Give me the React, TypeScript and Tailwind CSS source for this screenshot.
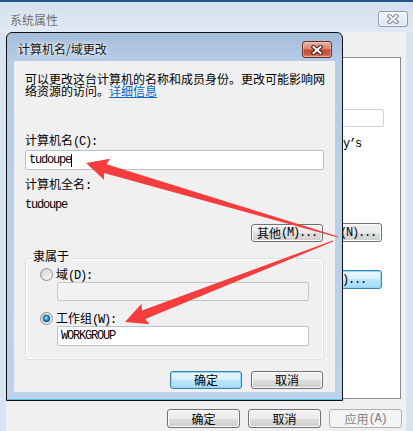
import React from "react";

const cjk = "font-['Noto_Sans_CJK_SC',sans-serif]";

function A({ children }: { children: React.ReactNode }) {
  return (
    <span className="font-['Liberation_Mono','Noto_Sans_CJK_SC',monospace] text-[12px] tracking-[-1.2px]">
      {children}
    </span>
  );
}

type BtnProps = {
  children: React.ReactNode;
  kind?: "normal" | "default" | "disabled";
  end?: boolean;
  className?: string;
};

function Btn({ children, kind = "normal", end = false, className = "" }: BtnProps) {
  const base =
    "flex items-center rounded-[3px] border text-[12px] leading-none whitespace-nowrap shrink-0";
  const j = end ? "justify-end" : "justify-center";
  const k =
    kind === "default"
      ? "border-[#3c7fb1] bg-[linear-gradient(to_bottom,#eaf6fd_0%,#d9f0fc_50%,#bee6fd_50%,#a7d9f5_100%)] shadow-[inset_0_0_0_1px_#8fd6f7] text-black"
      : kind === "disabled"
      ? "border-[#adb2b5] bg-[#f4f4f4] text-[#838383]"
      : "border-[#707070] bg-[linear-gradient(to_bottom,#f2f2f2_0%,#ebebeb_50%,#dddddd_50%,#cfcfcf_100%)] shadow-[inset_0_0_0_1px_#fcfcfc] text-black";
  return <div className={`${base} ${j} ${k} ${className}`}>{children}</div>;
}

function Radio({ checked = false }: { checked?: boolean }) {
  return (
    <svg width="13" height="13" viewBox="0 0 13 13" className="shrink-0">
      <defs>
        <linearGradient id="rgOuter" x1="0" y1="0" x2="1" y2="1">
          <stop offset="0" stopColor="#c9c9c9" />
          <stop offset="1" stopColor="#fbfbfb" />
        </linearGradient>
        <linearGradient id="rgInner" x1="0" y1="0" x2="1" y2="1">
          <stop offset="0" stopColor="#d6d6d6" />
          <stop offset="1" stopColor="#f7f7f7" />
        </linearGradient>
        <radialGradient id="rgDot" cx="0.45" cy="0.4" r="0.65">
          <stop offset="0" stopColor="#a8e8ff" />
          <stop offset="0.45" stopColor="#2f9ad9" />
          <stop offset="1" stopColor="#0b3f70" />
        </radialGradient>
      </defs>
      <circle cx="6.5" cy="6.5" r="6" fill="url(#rgOuter)" stroke="#8e8f8f" />
      <circle cx="6.5" cy="6.5" r="4.3" fill="url(#rgInner)" />
      {checked && (
        <circle cx="6.5" cy="6.5" r="3.4" fill="url(#rgDot)" stroke="#1a4a78" strokeWidth="0.7" />
      )}
    </svg>
  );
}

function XGlyph({ outline, fill }: { outline: string; fill: string }) {
  return (
    <svg width="12" height="10" viewBox="0 0 12 10">
      <path d="M2.5 2 L9.5 8 M9.5 2 L2.5 8" stroke={outline} strokeWidth="4.2" strokeLinecap="square" fill="none" />
      <path d="M2.5 2 L9.5 8 M9.5 2 L2.5 8" stroke={fill} strokeWidth="2" strokeLinecap="square" fill="none" />
    </svg>
  );
}

export default function App() {
  return (
    <div className={`relative w-[413px] h-[431px] overflow-hidden bg-[#d8e4f2] ${cjk}`}>
      {/* Background window: 系统属性 */}
      <div className="flex flex-col h-full">
        <div className="h-[2px] shrink-0 bg-[#25548c]" />
        <div className="h-[30px] shrink-0 flex items-start justify-between pl-[10px] pr-[5px] bg-[linear-gradient(to_bottom,#d3e0ef,#e0e9f4)]">
          <span className="mt-[12px] text-[12px] leading-[12px] text-[#6d6d6d] [text-shadow:0_0_6px_#fff]">
            系统属性
          </span>
          <div className="mt-[9px] w-[30px] h-[16px] rounded-[3px] border border-[#8c98a8] bg-[linear-gradient(to_bottom,#f4f7fb,#dbe3ee)] shadow-[inset_0_0_0_1px_rgba(255,255,255,0.7)] flex items-center justify-center">
            <XGlyph outline="#7d8898" fill="#ffffff" />
          </div>
        </div>
        <div className="flex-1 flex pl-[6px] pr-[7px] min-h-0">
          <div className="flex-1 bg-[#f0f0f0] flex flex-col">
            <div className="h-[25px] shrink-0" />
            <div className="h-[342px] shrink-0 ml-[7px] mr-[5px] bg-white border border-[#898c95] flex flex-col">
              <div className="mt-[51px] self-end mr-[16px] w-[300px] h-[18px] rounded-[2px] border border-[#cfd4da] bg-white" />
              <div className="mt-[7px] pl-[329px] leading-[12px] text-black">
                <A>y’s</A>
              </div>
              <Btn end className="mt-[73px] self-end mr-[18px] w-[110px] h-[19px] pr-[5px]">
                <A>ID(N)...</A>
              </Btn>
              <Btn kind="default" end className="mt-[28px] self-end mr-[18px] w-[110px] h-[19px] pr-[15px]">
                <A>(C)...</A>
              </Btn>
            </div>
            <div className="mt-[10px] flex justify-end gap-[8px] pr-[4px]">
              <Btn className="w-[73px] h-[19px]">确定</Btn>
              <Btn className="w-[73px] h-[19px]">取消</Btn>
              <Btn kind="disabled" className="w-[73px] h-[19px]">
                应用<A>(A)</A>
              </Btn>
            </div>
          </div>
        </div>
      </div>

      {/* Dialog window: 计算机名/域更改 */}
      <div className="absolute left-[6px] top-[32px] w-[337px] h-[369px] rounded-t-[6px] border border-[#111111] bg-[linear-gradient(to_bottom,#a3bcdb_0px,#b6cde8_28px,#bdd3ec_100%)] shadow-[inset_0_-1px_0_#5bc2ea] flex flex-col">
        <div className="h-[28px] shrink-0 flex items-start justify-between pl-[11px] pr-[10px]">
          <span className="mt-[10px] text-[12px] leading-[12px] text-[#111111] [text-shadow:0_0_6px_#ffffff,0_0_3px_#ffffff]">
            计算机名/域更改
          </span>
          <div className="mt-[8px] w-[30px] h-[17px] rounded-[3px] border border-[#6b2b20] bg-[linear-gradient(to_bottom,#eab0a2_0%,#d8897a_42%,#c24b35_55%,#c45a42_80%,#d8876d_100%)] shadow-[inset_0_0_0_1px_rgba(255,255,255,0.35)] flex items-center justify-center">
            <XGlyph outline="#4a1e16" fill="#ffffff" />
          </div>
        </div>
        <div className="mx-[7px] h-[331px] shrink-0 bg-[#f0f0f0] flex flex-col pl-[11px] pr-[11px] pt-[12px] text-black">
          <div className="text-[12px] leading-[12px] whitespace-nowrap">
            可以更改这台计算机的名称和成员身份。更改可能影响网
            <br />
            络资源的访问。<span className="text-[#0066cc] underline">详细信息</span>
          </div>
          <div className="mt-[37px] text-[12px] leading-[12px]">
            计算机名<A>(C):</A>
          </div>
          <div className="mt-[2px] h-[20px] rounded-[2px] border border-[#b4c2d2] bg-white flex items-center pl-[3px]">
            <A>tudoupe</A>
            <span className="w-px h-[13px] bg-black" />
          </div>
          <div className="mt-[8px] text-[12px] leading-[12px]">
            计算机全名<A>:</A>
          </div>
          <div className="mt-[3px] leading-[12px]">
            <A>tudoupe</A>
          </div>
          <Btn className="mt-[13px] self-end mr-[1px] w-[72px] h-[18px]">
            其他<A>(M)...</A>
          </Btn>
          <div className="relative mt-[16px] h-[102px] shrink-0 rounded-[3px] border border-[#d5dfe5] shadow-[inset_0_0_0_1px_#ffffff] flex flex-col pt-[9px] pl-[14px] pr-[14px]">
            <span className="absolute left-[6px] -top-[9px] px-[1px] bg-[#f0f0f0] text-[12px] leading-[12px]">
              隶属于
            </span>
            <div className="flex items-center h-[13px] gap-[3px] text-[12px] leading-[12px]">
              <Radio />
              <span>
                域<A>(D):</A>
              </span>
            </div>
            <div className="mt-[1px] ml-[17px] h-[19px] rounded-[2px] border border-[#c3c7cb] bg-[#f2f2f2]" />
            <div className="mt-[11px] flex items-center h-[13px] gap-[3px] text-[12px] leading-[12px]">
              <Radio checked />
              <span>
                工作组<A>(W):</A>
              </span>
            </div>
            <div className="mt-[1px] ml-[17px] h-[20px] rounded-[2px] border border-[#b4c2d2] bg-white flex items-center pl-[3px]">
              <A>WORKGROUP</A>
            </div>
          </div>
          <div className="mt-[11px] flex justify-end gap-[9px] pr-[1px]">
            <Btn kind="default" className="w-[72px] h-[18px]">确定</Btn>
            <Btn className="w-[72px] h-[18px]">取消</Btn>
          </div>
        </div>
      </div>

      {/* Red annotation arrows */}
      <svg
        className="absolute left-0 top-0 pointer-events-none"
        width="413"
        height="431"
        viewBox="0 0 413 431"
      >
        <polygon
          fill="#f53d3d"
          points="338.2,236.4 106.5,164.3 110.2,158.7 86,163 104.0,179.8 103.9,173.0 337.8,237.6"
        />
        <polygon
          fill="#f53d3d"
          points="332.8,240.4 142.0,310.6 141.5,303.8 125,322 149.5,324.3 145.3,318.9 333.2,241.6"
        />
      </svg>
    </div>
  );
}
